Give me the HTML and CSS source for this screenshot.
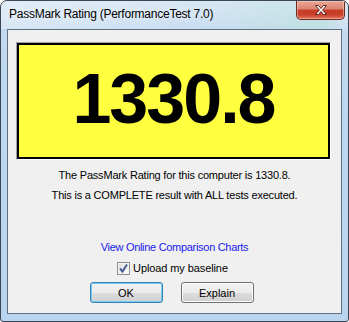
FILE: index.html
```html
<!DOCTYPE html>
<html>
<head>
<meta charset="utf-8">
<link rel="stylesheet" href="styles.css">
</head>
<body>
<div class="window">
  <div class="titlebar">
    <span class="title">PassMark Rating (PerformanceTest 7.0)</span>
    <div class="close">
      <svg width="16" height="12" viewBox="0 0 16 12">
        <path d="M2.5 1.5 L5.5 1.5 L8 4.5 L10.5 1.5 L13.5 1.5 L9.6 6 L13.5 10.5 L10.5 10.5 L8 7.5 L5.5 10.5 L2.5 10.5 L6.4 6 Z" fill="#fff" stroke="#5a2a22" stroke-width="1" stroke-linejoin="round"/>
      </svg>
    </div>
  </div>
  <div class="client">
    <div class="score-box">
      <div class="score">1330.8</div>
    </div>
    <p class="msg first">The PassMark Rating for this computer is 1330.8.</p>
    <p class="msg">This is a COMPLETE result with ALL tests executed.</p>
    <a class="link" href="#">View Online Comparison Charts</a>
    <label class="check">
      <span class="box">
        <svg width="11" height="11" viewBox="0 0 11 11">
          <path d="M2 5.5 L4.5 8.5 L9 1.5" fill="none" stroke="#4a5f97" stroke-width="2"/>
        </svg>
      </span>
      <span>Upload my baseline</span>
    </label>
    <div class="buttons">
      <button class="btn default">OK</button>
      <button class="btn">Explain</button>
    </div>
  </div>
</div>
</body>
</html>
```
FILE: styles.css
```css
html, body {
  margin: 0;
  padding: 0;
  background: #ffffff;
}
.window {
  width: 349px;
  height: 322px;
  box-sizing: border-box;
  border: 1px solid #3a4654;
  border-radius: 7px 7px 3px 3px;
  background: linear-gradient(180deg, #d3e4f3 0px, #c2d9ef 30px, #b9d4ee 100%);
  display: flex;
  flex-direction: column;
  overflow: hidden;
}
.titlebar {
  height: 28px;
  display: flex;
  align-items: flex-start;
  justify-content: space-between;
  background: linear-gradient(100deg, rgba(255,255,255,0.35) 0%, rgba(255,255,255,0.1) 60%, rgba(190,230,215,0.5) 92%, rgba(255,255,255,0.2) 100%);
}
.title {
  font-family: "Liberation Sans", Arial, sans-serif;
  font-size: 12px;
  letter-spacing: -0.25px;
  color: #000;
  margin: 6px 0 0 8px;
  line-height: 15px;
  text-shadow: 0 0 6px rgba(255,255,255,0.9);
}
.close {
  width: 49px;
  height: 19px;
  margin-right: 3px;
  box-sizing: border-box;
  border: 1px solid #6b2b22;
  border-top: none;
  border-radius: 0 0 5px 5px;
  background: linear-gradient(180deg, #eaa797 0%, #dc8470 45%, #c83c25 50%, #c8402a 75%, #e4755a 100%);
  display: flex;
  align-items: center;
  justify-content: center;
  box-shadow: inset 0 0 0 1px rgba(255,210,200,0.5);
}
.close svg {
  margin-top: -1px;
}
.client {
  margin: 0 6px;
  height: 285px;
  box-sizing: border-box;
  border: 1px solid #5d6f80;
  background: #f0f0f0;
  display: flex;
  flex-direction: column;
  align-items: center;
  font-family: "Liberation Sans", Arial, sans-serif;
  font-size: 11px;
}
.score-box {
  margin-top: 12px;
  width: 315px;
  height: 118px;
  box-sizing: border-box;
  border-style: solid;
  border-width: 1px;
  border-color: #a0a0a0 #ffffff #ffffff #a0a0a0;
  align-self: flex-start;
  margin-left: 8px;
}
.score-box .score {
  box-sizing: border-box;
  height: 116px;
  border: 2px solid #000;
  background: #ffff40;
  display: flex;
  align-items: center;
  justify-content: center;
  font-family: "Liberation Sans", Arial, sans-serif;
  font-weight: bold;
  font-size: 70px;
  letter-spacing: -2px;
  color: #000;
  padding-bottom: 4px;
}
.msg {
  margin: 0;
  line-height: 20px;
  letter-spacing: -0.2px;
  color: #000;
}
.msg.first {
  margin-top: 5px;
}
.link {
  margin-top: 35px;
  color: #1a1aee;
  text-decoration: none;
  line-height: 14px;
  letter-spacing: -0.3px;
}
.check {
  margin-top: 7px;
  display: flex;
  align-items: center;
  gap: 3px;
  font-size: 11px;
  letter-spacing: -0.1px;
  line-height: 14px;
  margin-left: -4px;
}
.check .box {
  width: 13px;
  height: 13px;
  box-sizing: border-box;
  border: 1px solid #8e8f8f;
  background: linear-gradient(135deg, #dcdcdc, #ffffff);
  display: flex;
  align-items: center;
  justify-content: center;
  box-shadow: inset 0 0 0 1px #f4f4f4;
}
.buttons {
  margin-top: 7px;
  display: flex;
  gap: 18px;
  margin-left: -6px;
}
.btn {
  width: 73px;
  height: 21px;
  box-sizing: border-box;
  border: 1px solid #707070;
  border-radius: 3px;
  background: linear-gradient(180deg, #f2f2f2 0%, #ebebeb 50%, #dddddd 51%, #cfcfcf 100%);
  box-shadow: inset 0 0 0 1px #fcfcfc;
  font-family: "Liberation Sans", Arial, sans-serif;
  font-size: 11px;
  color: #000;
  padding: 0;
}
.btn.default {
  border-color: #3c7fb1;
  box-shadow: inset 0 0 0 1px #6fd0f5;
}
```
